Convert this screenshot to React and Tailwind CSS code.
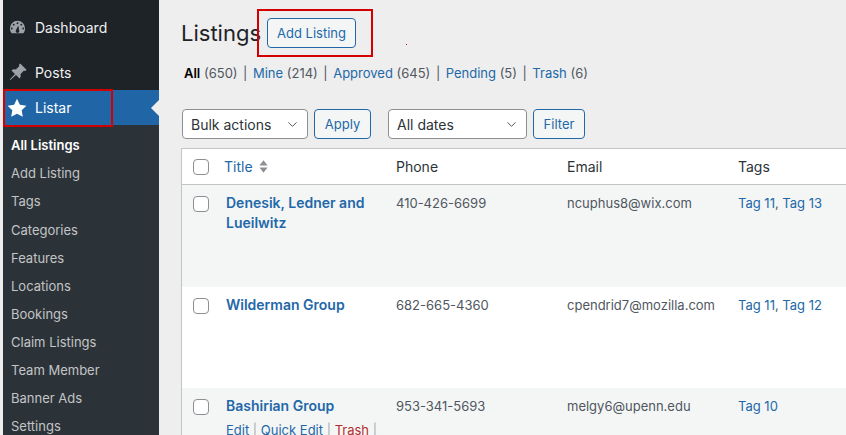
import React from 'react';
import { ChevronDown } from 'lucide-react';

const subMenu = ['All Listings', 'Add Listing', 'Tags', 'Categories', 'Features', 'Locations', 'Bookings', 'Claim Listings', 'Team Member', 'Banner Ads', 'Settings'];

const filters = [
  { label: 'All', count: '(650)', current: true },
  { label: 'Mine', count: '(214)' },
  { label: 'Approved', count: '(645)' },
  { label: 'Pending', count: '(5)' },
  { label: 'Trash', count: '(6)' },
];

const rows = [
  { name: ['Denesik, Ledner and', 'Lueilwitz'], phone: '410-426-6699', email: 'ncuphus8@wix.com', tags: ['Tag 11', 'Tag 13'], height: 'h-[102px]', bg: 'bg-[#f4f6f6]' },
  { name: ['Wilderman Group'], phone: '682-665-4360', email: 'cpendrid7@mozilla.com', tags: ['Tag 11', 'Tag 12'], height: 'h-[101px]', bg: 'bg-white' },
  { name: ['Bashirian Group'], phone: '953-341-5693', email: 'melgy6@upenn.edu', tags: ['Tag 10'], height: 'h-[101px]', bg: 'bg-[#f4f6f6]', actions: true },
];

const Checkbox = () => (
  <span className="block h-4 w-4 rounded-[4px] border border-[#8c8f94] bg-white" />
);

const Select = ({ label, width }) => (
  <div className={`flex h-[30px] items-center justify-between rounded-[4px] border border-[#8c8f94] bg-white pl-2 pr-[7px] text-[14px] text-[#2c3338] ${width}`}>
    {label}
    <ChevronDown size={15} strokeWidth={1.6} className="text-[#50575e]" />
  </div>
);

const OutlineButton = ({ children, className }) => (
  <div className={`flex items-center justify-center rounded-[4px] border border-[#2268a8] bg-[#f4f6f6] pt-[1px] text-[13px] text-[#2268a8] ${className}`}>
    {children}
  </div>
);

const App = () => {
  return (
    <div className="relative flex h-[435px] w-[846px] overflow-hidden bg-[#eeeeee] font-['Inter','Liberation_Sans',sans-serif]">
      {/* sidebar */}
      <div className="ml-[3px] flex w-[156px] shrink-0 flex-col bg-[#1d2327] text-[14px]">
        <div className="flex h-[55px] shrink-0 items-center text-[#f0f0f1]">
          <svg viewBox="0 0 20 20" className="ml-[5px] mr-[8px] h-[19px] w-[19px] fill-[#9ca2a7]">
            <path d="M3.76 16h12.48A8 8 0 0 0 18 11a8 8 0 1 0-16 0 8 8 0 0 0 1.76 5zM10 4.5a1 1 0 1 1 0 2 1 1 0 0 1 0-2zM6 6a1 1 0 1 1 0 2 1 1 0 0 1 0-2zm8 0a1 1 0 1 1 0 2 1 1 0 0 1 0-2zM4 10a1 1 0 1 1 0 2 1 1 0 0 1 0-2zm12 0a1 1 0 1 1 0 2 1 1 0 0 1 0-2zm-5.2-2.2.9 5.2a1.9 1.9 0 1 1-3.4 0z" />
          </svg>
          Dashboard
        </div>
        <div className="flex h-[35px] shrink-0 items-center pb-[1px] text-[#f0f0f1]">
          <svg viewBox="0 0 20 20" className="ml-[5px] mr-[7px] h-[20px] w-[20px] fill-[#9ca2a7]">
            <path d="M12.2 1.5 18.5 7.8 17 9.2l-1-.6-3.6 3.6c.6 1.6.3 3.1-.8 4.3L8 12.9l-5.6 5.2-.6-.6L7 11.9 3.5 8.4c1.2-1.1 2.7-1.4 4.3-.8l3.6-3.6-.6-1z" />
          </svg>
          Posts
        </div>
        <div className="relative flex h-[35px] shrink-0 items-center bg-[#2065a5] text-white">
          <svg viewBox="0 0 20 20" className="ml-[4px] mr-[8px] h-[20px] w-[20px] fill-white">
            <path d="m10 .8 2.9 6 6.5.9-4.7 4.6 1.1 6.5L10 15.7l-5.8 3.1 1.1-6.5L.6 7.7l6.5-.9z" />
          </svg>
          Listar
          <span className="absolute right-0 top-[10px] h-0 w-0 border-y-[8px] border-r-[8px] border-y-transparent border-r-[#eeeeee]" />
        </div>
        <div className="flex flex-1 flex-col bg-[#2c3338] pt-[7px] text-[13px] text-[#c3c4c7]">
          {subMenu.map((item, i) => (
            <div key={item} className={`flex h-[28.1px] shrink-0 items-center pl-2 ${i === 0 ? 'font-semibold text-white' : ''}`}>
              {item}
            </div>
          ))}
        </div>
      </div>

      {/* main content */}
      <div className="min-w-0 flex-1 pl-[22px]">
        <div className="flex items-center pt-[18px]">
          <h1 className="text-[22px] leading-[30px] text-[#1d2327]">Listings</h1>
          <OutlineButton className="ml-[6px] h-[30px] w-[89px]">Add Listing</OutlineButton>
        </div>

        <div className="mt-[17px] flex h-[18px] items-center whitespace-nowrap pl-[3px] text-[13px] text-[#50575e]">
          {filters.map((f, i) => (
            <span key={f.label}>
              <span className={f.current ? 'font-semibold text-black' : 'text-[#2268a8]'}>{f.label}</span> {f.count}
              {i < filters.length - 1 && <span className="mx-[5.5px] text-[#50575e]">|</span>}
            </span>
          ))}
          <span className="absolute left-[406px] top-[44px] h-[1px] w-[1px] bg-[#d01010]" />
        </div>

        <div className="mt-[26px] flex h-[30px] pl-[1px]">
          <Select label="Bulk actions" width="w-[126px]" />
          <OutlineButton className="ml-[6px] w-[57px]">Apply</OutlineButton>
          <div className="ml-[17px]">
            <Select label="All dates" width="w-[139px]" />
          </div>
          <OutlineButton className="ml-[6px] w-[52px]">Filter</OutlineButton>
        </div>

        {/* table */}
        <div className="mt-[9px] w-[700px] border-l border-t border-[#c3c4c7] bg-white text-[13px]">
          <div className="flex h-[36px] items-center border-b border-[#c3c4c7] text-[14px] text-[#2c3338]">
            <div className="w-[42px] shrink-0 pl-[11px]"><Checkbox /></div>
            <div className="flex w-[172px] shrink-0 items-center text-[#2268a8]">
              Title
              <svg viewBox="0 0 10 16" className="ml-[6px] h-[15px] w-[9px] fill-[#8c8f94]">
                <path d="M5 1 9.5 7H.5zM5 15 .5 9h9z" />
              </svg>
            </div>
            <div className="w-[171px] shrink-0">Phone</div>
            <div className="w-[171px] shrink-0">Email</div>
            <div>Tags</div>
          </div>
          {rows.map((row) => (
            <div key={row.phone} className={`flex ${row.height} ${row.bg}`}>
              <div className="w-[42px] shrink-0 pl-[11px] pt-[11px]"><Checkbox /></div>
              <div className="w-[172px] shrink-0 pl-[2px] pt-[8px]">
                <div className="text-[14px] font-semibold leading-[20px] text-[#2268a8]">
                  {row.name.map((line) => <div key={line}>{line}</div>)}
                </div>
                {row.actions && (
                  <div className="mt-[5px] whitespace-nowrap leading-[18px] text-[#a7aaad]">
                    <span className="text-[#2268a8]">Edit</span> | <span className="text-[#2268a8]">Quick Edit</span> | <span className="text-[#b32d2e]">Trash</span> |
                  </div>
                )}
              </div>
              <div className="w-[171px] shrink-0 pt-[9px] leading-[18px] text-[#50575e]">{row.phone}</div>
              <div className="w-[171px] shrink-0 pt-[9px] leading-[18px] text-[#50575e]">{row.email}</div>
              <div className="pt-[9px] leading-[18px] text-[#50575e]">
                {row.tags.map((tag, i) => (
                  <span key={tag}>
                    {i > 0 && ', '}
                    <span className="text-[#2268a8]">{tag}</span>
                  </span>
                ))}
              </div>
            </div>
          ))}
        </div>
      </div>

      {/* red annotation boxes */}
      <div className="absolute left-[3px] top-[89px] h-[38px] w-[110px] border-2 border-[#d40000]" />
      <div className="absolute left-[257px] top-[9px] h-[48px] w-[116px] border-2 border-[#d40000]" />
    </div>
  );
};

export default App;
